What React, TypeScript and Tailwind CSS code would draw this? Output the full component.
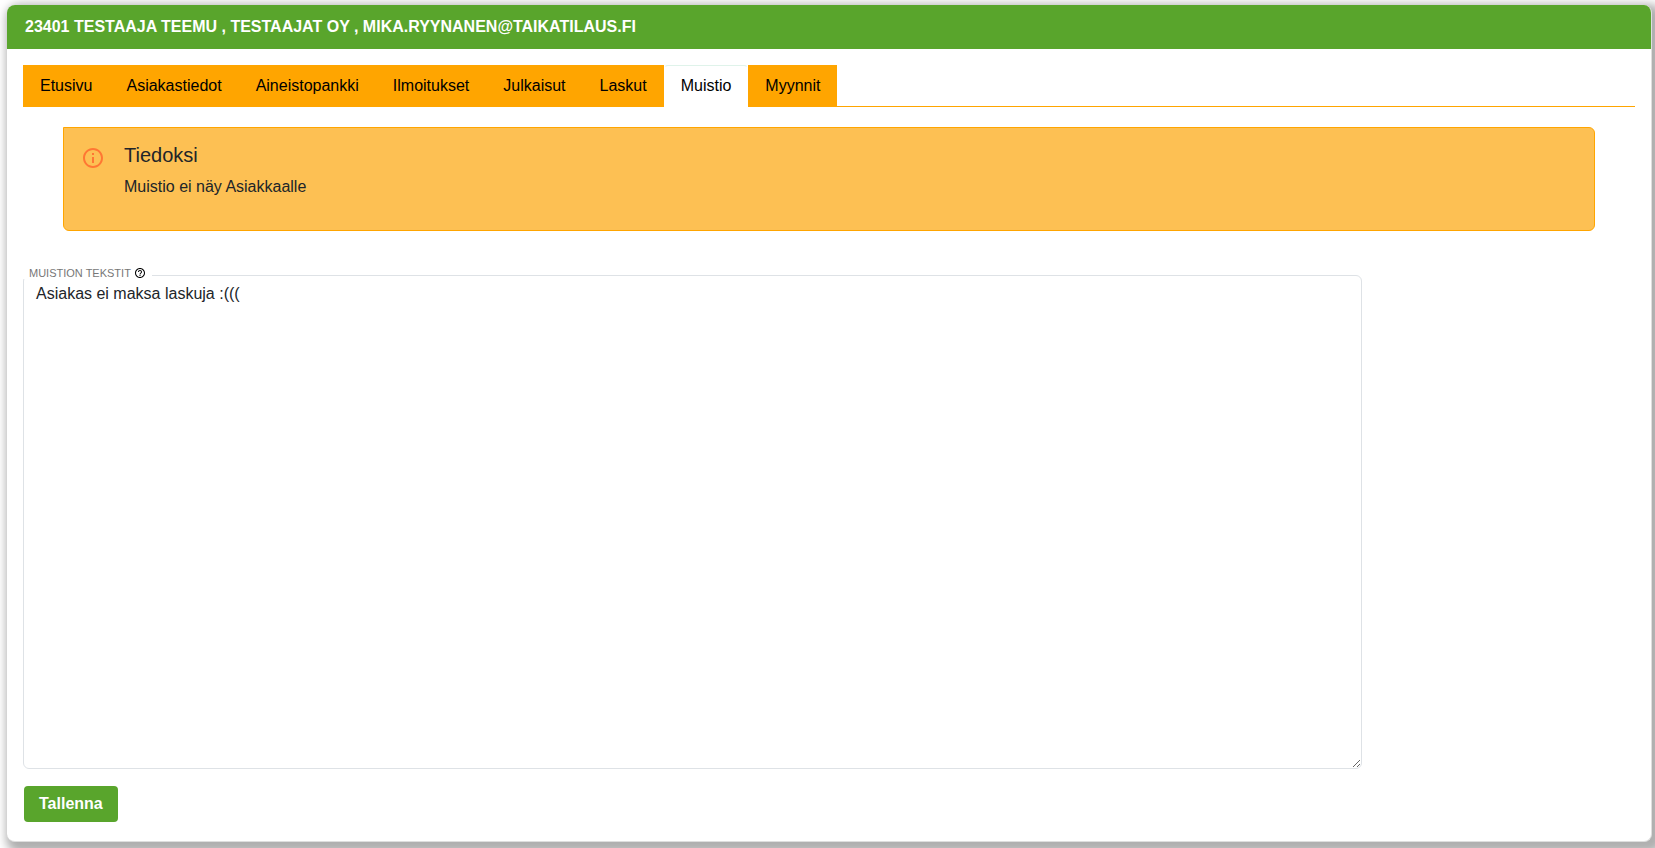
import { useState } from "react";
import { MdHelpOutline, MdOutlineInfo } from "react-icons/md";
import clsx from "clsx";

const tabs = [
  "Etusivu",
  "Asiakastiedot",
  "Aineistopankki",
  "Ilmoitukset",
  "Julkaisut",
  "Laskut",
  "Muistio",
  "Myynnit",
];

function Tabs({ active }: { active: string }) {
  return (
    <nav className="flex border-b border-[#ffa500]">
      {tabs.map((tab) => (
        <a
          key={tab}
          href={`#${tab.toLowerCase()}`}
          aria-current={tab === active ? "page" : undefined}
          className={clsx(
            "-mb-px border px-4 py-2 leading-6 text-black",
            tab === active
              ? "rounded-t-sm border-x-transparent border-t-[#dff3ea] border-b-white bg-white"
              : "border-[#ffa500] bg-[#ffa500]",
          )}
        >
          {tab}
        </a>
      ))}
    </nav>
  );
}

function Notice() {
  return (
    <section className="mx-10 mt-5 flex gap-[19px] rounded-md rounded-tl-none border border-[#ffa500] bg-[#fdc053] px-[17px] pt-3 pb-[31px] text-[#212529]">
      <MdOutlineInfo className="mt-1.5 size-6 text-[#ff7733]" />
      <div>
        <h2 className="text-xl leading-[30px]">Tiedoksi</h2>
        <p className="mt-[5px] leading-6">Muistio ei näy Asiakkaalle</p>
      </div>
    </section>
  );
}

function MemoForm() {
  const [memo, setMemo] = useState("Asiakas ei maksa laskuja :(((");

  return (
    <form className="mt-11" onSubmit={(e) => e.preventDefault()}>
      <div className="relative w-5/6 pr-1">
        <textarea
          id="memo"
          value={memo}
          onChange={(e) => setMemo(e.target.value)}
          className="block h-[494px] w-full rounded-md border border-[#dee2e6] bg-white px-3 py-1.5 leading-6 text-[#212529]"
        />
        <label
          htmlFor="memo"
          className="absolute -top-2 left-0 flex items-center gap-[3px] bg-white px-1.5 text-[11px] leading-[11px] font-medium text-[#777777]"
        >
          MUISTION TEKSTIT
          <MdHelpOutline className="size-3 text-black" />
        </label>
      </div>
      <button
        type="submit"
        className="mt-[17px] ml-px h-9 rounded bg-[#59a52c] px-[15px] leading-6 font-bold text-white"
      >
        Tallenna
      </button>
    </form>
  );
}

export default function App() {
  return (
    <div className="overflow-hidden bg-white pt-[5px] pr-[3px] pb-1.5 pl-[7px] font-['Liberation_Sans',Arial,sans-serif] text-base">
      <main className="overflow-hidden rounded-lg border-r border-b border-[#dedede] bg-white shadow-[5px_5px_10px_6px_#b0b0b0]">
        <h1 className="bg-[#59a52c] px-[18px] py-2.5 leading-6 font-bold text-white">
          23401 TESTAAJA TEEMU , TESTAAJAT OY , MIKA.RYYNANEN@TAIKATILAUS.FI
        </h1>
        <div className="px-4 pt-4 pb-[19px]">
          <Tabs active="Muistio" />
          <Notice />
          <MemoForm />
        </div>
      </main>
    </div>
  );
}
